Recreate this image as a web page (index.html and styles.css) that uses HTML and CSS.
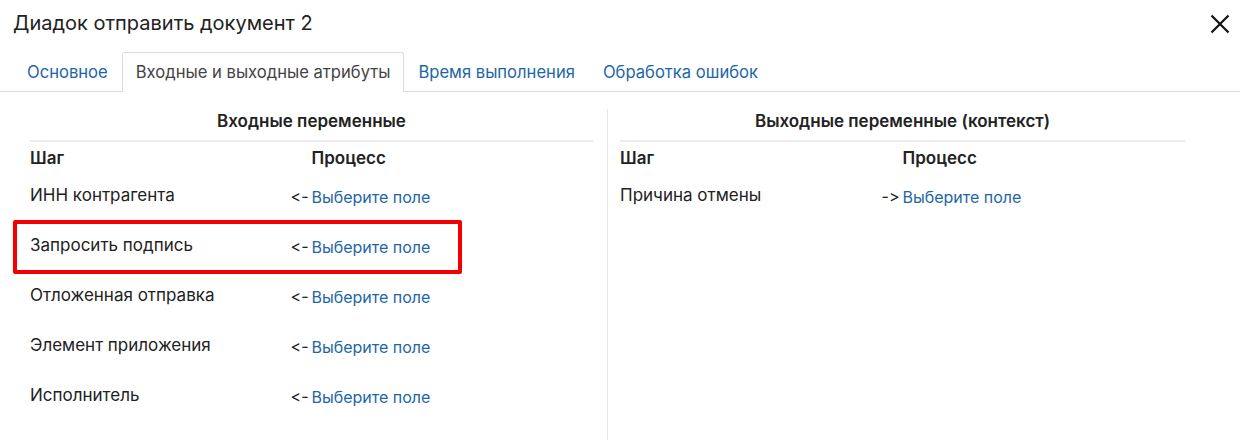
FILE: index.html
```html
<!DOCTYPE html>
<html lang="ru">
<head>
<meta charset="utf-8">
<link rel="stylesheet" href="styles.css">
</head>
<body>
<div class="dialog">
  <header class="dlg-header">
    <h1 class="dlg-title">Диадок отправить документ 2</h1>
    <button class="close" aria-label="Закрыть">
      <svg width="20" height="20" viewBox="0 0 20 20"><path d="M1.5 1.5 L18.5 18.5 M18.5 1.5 L1.5 18.5" stroke="#111" stroke-width="2.2" fill="none"/></svg>
    </button>
  </header>
  <nav class="tabs">
    <a class="tab">Основное</a>
    <a class="tab active">Входные и выходные атрибуты</a>
    <a class="tab">Время выполнения</a>
    <a class="tab">Обработка ошибок</a>
  </nav>
  <main class="content">
    <section class="panel">
      <h2 class="panel-title">Входные переменные</h2>
      <div class="grid head"><div>Шаг</div><div>Процесс</div></div>
      <div class="grid row"><div class="cell"><span>ИНН контрагента</span><span class="arrow">&lt;-</span></div><a class="link">Выберите поле</a></div>
      <div class="grid row highlighted"><div class="cell"><span>Запросить подпись</span><span class="arrow">&lt;-</span></div><a class="link">Выберите поле</a></div>
      <div class="grid row"><div class="cell"><span>Отложенная отправка</span><span class="arrow">&lt;-</span></div><a class="link">Выберите поле</a></div>
      <div class="grid row"><div class="cell"><span>Элемент приложения</span><span class="arrow">&lt;-</span></div><a class="link">Выберите поле</a></div>
      <div class="grid row"><div class="cell"><span>Исполнитель</span><span class="arrow">&lt;-</span></div><a class="link">Выберите поле</a></div>
    </section>
    <div class="divider"></div>
    <section class="panel right">
      <h2 class="panel-title">Выходные переменные (контекст)</h2>
      <div class="grid head"><div>Шаг</div><div>Процесс</div></div>
      <div class="grid row"><div class="cell"><span>Причина отмены</span><span class="arrow">-&gt;</span></div><a class="link">Выберите поле</a></div>
    </section>
  </main>
</div>
</body>
</html>
```
FILE: styles.css
```css
*, *::before, *::after { box-sizing: border-box; }
html, body { margin: 0; padding: 0; background: #fff; }
body {
  font-family: Inter, "Noto Sans", sans-serif;
  font-variant-ligatures: none;
  font-feature-settings: "calt" 0, "liga" 0;
  color: #222;
  width: 1240px;
  height: 440px;
  overflow: hidden;
}
.dlg-header {
  display: flex;
  justify-content: space-between;
  align-items: flex-start;
  padding: 10px 10px 0 13px;
  height: 52px;
}
.dlg-title {
  margin: 0;
  font-size: 20px;
  font-weight: 400;
  line-height: 26px;
  color: #222;
}
.close {
  border: 0;
  background: none;
  padding: 0;
  margin-top: 4px;
  width: 20px;
  height: 20px;
}
.close svg { display: block; }
.tabs {
  display: flex;
  padding-left: 13px;
  border-bottom: 1px solid #dcdcdc;
  height: 40px;
}
.tab {
  display: flex;
  align-items: center;
  padding: 0 13px 1px;
  font-size: 16.6px;
  color: #1e66a6;
  border: 1px solid transparent;
  border-bottom: 0;
  border-radius: 3px 3px 0 0;
  margin-bottom: -1px;
  height: 40px;
}
.tab.active {
  color: #444;
  border-color: #dcdcdc;
  background: #fff;
}
.content {
  display: flex;
  padding: 15px 0 0 30px;
}
.panel {
  width: 563px;
}
.panel.right {
  width: 565px;
}
.divider {
  width: 1px;
  background: #e6e6e6;
  margin: 2px 12px 0 14px;
  height: 340px;
}
.panel-title {
  margin: 0;
  text-align: center;
  font-size: 17px;
  font-weight: 600;
  line-height: 28px;
  padding-bottom: 5px;
  border-bottom: 2px solid #ececec;
}
.grid {
  display: grid;
  grid-template-columns: 1fr 1fr;
}
.head {
  font-size: 17px;
  font-weight: 600;
  height: 32px;
  align-items: center;
}
.row {
  font-size: 17px;
  line-height: 24px;
  height: 50px;
  align-items: start;
  padding-top: 9px;
  position: relative;
}
.cell {
  display: flex;
  justify-content: space-between;
  padding-right: 3px;
}
.arrow {
  color: #222;
  font-size: 16px;
  padding-top: 1px;
}
.link {
  color: #1e66a6;
  font-size: 16px;
  padding-top: 2px;
}
.highlighted::before {
  content: "";
  position: absolute;
  left: -17px;
  top: -4px;
  width: 449px;
  height: 54px;
  border: 4px solid #f40000;
  border-radius: 2px;
}
```
